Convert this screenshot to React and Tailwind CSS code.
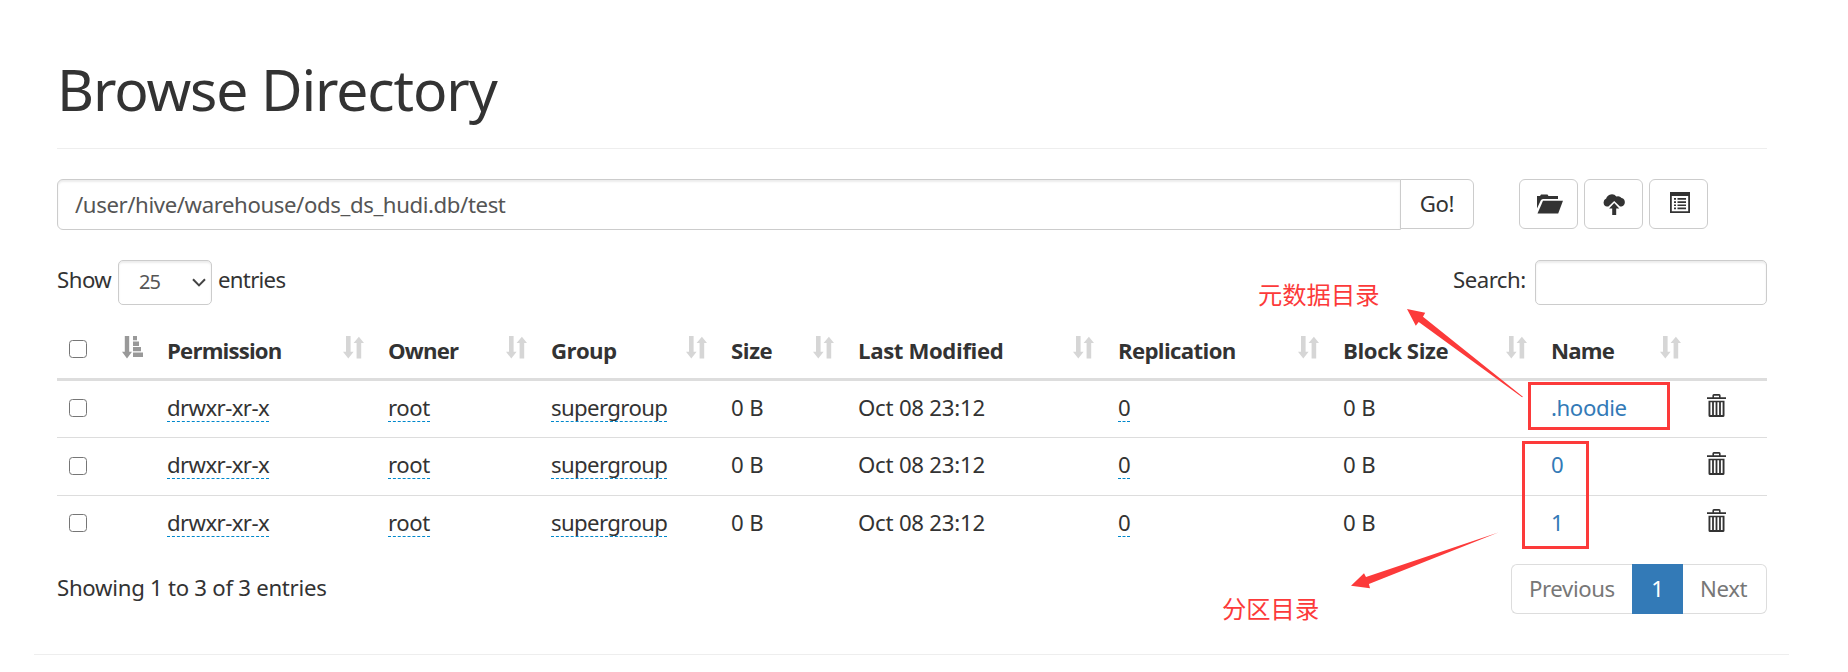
import React from "react";

const columns = [
  { label: "Permission", width: "w-[221px]", track: "tracking-[-0.83px]" },
  { label: "Owner", width: "w-[163px]", track: "tracking-[-0.83px]" },
  { label: "Group", width: "w-[180px]", track: "tracking-[-0.6px]" },
  { label: "Size", width: "w-[127px]", track: "tracking-[-0.4px]" },
  { label: "Last Modified", width: "w-[260px]", track: "tracking-[-0.38px]" },
  { label: "Replication", width: "w-[225px]", track: "tracking-[-0.65px]" },
  { label: "Block Size", width: "w-[208px]", track: "tracking-[-0.42px]" },
  { label: "Name", width: "w-[154px]", track: "tracking-[-0.85px]" },
];

const rows = [{ name: ".hoodie" }, { name: "0" }, { name: "1" }];

function SortBoth() {
  return (
    <svg className="h-[23px] w-[21px] shrink-0 fill-[#d6d6d6]" viewBox="0 0 21 23">
      <path d="M3 0h4.600v15.800H10.600L5.300 22.600 0 15.800H3z" />
      <path d="M13.600 22.600h4.600V7H21L15.900 0.700 10.600 7h3z" />
    </svg>
  );
}

function SortAsc() {
  return (
    <svg className="h-[23px] w-[21px] shrink-0 fill-[#999]" viewBox="0 0 21 23">
      <path d="M2.800 0h4.400v15.800H10L5 22.500 0 15.800h2.800z" />
      <path d="M11 0h4v4.300h-4zM11 5.600h6v4.300h-6zM11 11h8v4.300h-8zM11 16.600h10v4.300h-10z" />
    </svg>
  );
}

function FolderOpen() {
  return (
    <svg className="h-5 w-[26px] fill-[#333]" viewBox="0 0 26 20">
      <path d="M0 14.500V2h3L4 0.400h6.500L11.500 2H21V5H6a2.500 2.500 0 0 0-2.300 1.500z" />
      <path d="M6 6.800H26l-4.800 12.700H0.500z" />
    </svg>
  );
}

function CloudUpload() {
  return (
    <svg className="h-[21px] w-[22px] fill-[#333]" viewBox="0 0 22 21">
      <path d="M4 12.600A4.200 4.200 0 0 1 3.200 4.600 5.800 5.800 0 0 1 13.400 2.600 5 5 0 0 1 18.600 3.900 4.500 4.500 0 0 1 18.400 12.600H17L11.200 7 5.400 12.600z" />
      <path d="M11.200 9 16.300 14.600H13.200V21H9.200V14.600H6.100z" />
    </svg>
  );
}

function ListAlt() {
  return (
    <svg className="h-[21px] w-5 fill-[#333]" viewBox="0 0 20 21">
      <path fillRule="evenodd" d="M0 0h20v21H0zM1.800 4v15.200h16.400V4z" />
      <path d="M4 6h2v1.700H4zM7.500 6H16v1.700H7.500zM4 9.200h2v1.700H4zM7.500 9.200H16v1.700H7.500zM4 12.400h2v1.700H4zM7.500 12.400H16v1.700H7.500zM4 15.600h2v1.700H4zM7.500 15.600H16v1.700H7.500z" />
    </svg>
  );
}

function Trash() {
  return (
    <svg className="h-[23px] w-[19px] fill-[#333]" viewBox="0 0 19 23">
      <path fillRule="evenodd" d="M0 3.200h5.400V1.500Q5.400 0 6.900 0h5.200q1.500 0 1.500 1.500v1.700H19v1.900H0zM7 1.700v1.500h5V1.700z" />
      <path fillRule="evenodd" d="M1.500 6.700h16V21.500q0 1.500-1.500 1.500h-13q-1.500 0-1.500-1.500zM3.400 8.200v12.900h1.700V8.200zM6.900 8.200v12.900h1.700V8.200zM10.400 8.200v12.900h1.700V8.200zM13.900 8.200v12.900h1.700V8.200z" />
    </svg>
  );
}

function IconButton({ children }) {
  return (
    <button className="flex h-[50px] w-[59px] justify-center rounded-md border border-[#ccc] bg-white">
      {children}
    </button>
  );
}

function Checkbox() {
  return (
    <span className="block h-[18px] w-[18px] rounded-[3.500px] border-[1.500px] border-[#767676] bg-white" />
  );
}

function Editable({ children, track }) {
  return (
    <span className={"inline-block h-[28px] border-b border-dashed border-[#0088cc] " + track}>{children}</span>
  );
}

const cell = "pl-[12px] pt-[13px] align-top leading-[28px]";

export default function App() {
  return (
    <div className="relative h-[672px] w-[1848px] overflow-hidden bg-white font-['Noto_Sans','Noto_Sans_CJK_SC',sans-serif] text-[22.2px] text-[#333]">
      <main className="ml-[57px] w-[1710px]">
        <header className="h-[149px] border-b border-[#eee] pt-[56px]">
          <h1 className="text-[57px] leading-[66px] tracking-[-1.13px]">Browse Directory</h1>
        </header>

        <div className="mt-[30px] flex items-start">
          <div className="flex h-[51px] w-[1344px] items-center rounded-l-md border border-[#ccc] pl-[17px] tracking-[-0.4px] text-[#555] shadow-[inset_0_2px_2px_rgba(0,0,0,0.075)]">
            /user/hive/warehouse/ods_ds_hudi.db/test
          </div>
          <button className="-ml-px h-[50px] w-[74px] rounded-r-md border border-[#ccc] bg-white tracking-[-0.4px]">Go!</button>
          <div className="ml-[45px] flex gap-[6px]">
            <IconButton><span className="pl-[3px] pt-[14px]"><FolderOpen /></span></IconButton>
            <IconButton><span className="pl-px pt-[14px]"><CloudUpload /></span></IconButton>
            <IconButton><span className="pl-[2px] pt-[12px]"><ListAlt /></span></IconButton>
          </div>
        </div>

        <div className="mt-[30px] flex h-[45px] justify-between">
          <div className="flex items-start leading-[40px]">
            <span className="w-[61px] tracking-[-0.5px]">Show</span>
            <div className="flex h-[45px] w-[94px] items-center justify-between rounded-[5px] border border-[#ccc] pb-px pl-[20px] pr-[5px] text-[20px] text-[#555] shadow-[inset_0_2px_2px_rgba(0,0,0,0.075)]">
              <span className="tracking-[-1px]">25</span>
              <svg className="h-[9px] w-[14px]" viewBox="0 0 14 9" fill="none" stroke="#444" strokeWidth="2">
                <path d="M1 1.200 7 7.400 13 1.200" />
              </svg>
            </div>
            <span className="ml-[6px] tracking-[-0.7px]">entries</span>
          </div>
          <div className="flex items-start leading-[40px]">
            <span className="w-[82px] tracking-[-0.5px]">Search:</span>
            <div className="h-[45px] w-[232px] rounded-[5px] border border-[#ccc] shadow-[inset_0_2px_2px_rgba(0,0,0,0.075)]" />
          </div>
        </div>

        <table className="mt-[19px] w-[1710px] table-fixed border-separate border-spacing-0">
          <thead>
            <tr className="h-[57px]">
              <th className="w-[98px] border-b-3 border-[#ddd] p-0 align-top">
                <div className="flex justify-between pl-[12px] pr-[12px] pt-[12px]">
                  <span className="pt-[4px]"><Checkbox /></span>
                  <SortAsc />
                </div>
              </th>
              {columns.map((c) => (
                <th key={c.label} className={"border-b-3 border-[#ddd] p-0 text-left align-top font-['Open_Sans'] font-bold " + c.width}>
                  <div className="flex items-start justify-between pl-[12px] pr-[12px] pt-[12px]">
                    <span className={"mt-px whitespace-nowrap leading-[28px] " + c.track}>{c.label}</span>
                    <SortBoth />
                  </div>
                </th>
              ))}
              <th className="w-[74px] border-b-3 border-[#ddd] p-0" />
            </tr>
          </thead>
          <tbody className="[&>tr+tr>td]:border-t [&>tr+tr>td]:border-[#ddd]">
            {rows.map((r, i) => (
              <tr key={r.name} className={i === 0 ? "h-[56px]" : "h-[58px]"}>
                <td className={i === 1 ? "pl-[12px] pt-[19px] align-top" : "pl-[12px] pt-[18px] align-top"}><Checkbox /></td>
                <td className={cell}><Editable track="tracking-[-0.6px]">drwxr-xr-x</Editable></td>
                <td className={cell}><Editable track="tracking-[-0.4px]">root</Editable></td>
                <td className={cell}><Editable track="tracking-[-0.62px]">supergroup</Editable></td>
                <td className={cell + " tracking-[-0.1px]"}>0 B</td>
                <td className={cell + " tracking-[-0.22px]"}>Oct 08 23:12</td>
                <td className={cell}><Editable track="tracking-[-0.4px]">0</Editable></td>
                <td className={cell + " tracking-[-0.1px]"}>0 B</td>
                <td className={cell + " tracking-[-0.4px] text-[#337ab7]"}>{r.name}</td>
                <td className={i === 1 ? "pl-[14px] pt-[14px] align-top" : "pl-[14px] pt-[13px] align-top"}><Trash /></td>
              </tr>
            ))}
          </tbody>
        </table>

        <div className="mt-[11px] flex h-[50px] justify-between">
          <div className="pt-[4px] leading-[40px] tracking-[-0.27px]">Showing 1 to 3 of 3 entries</div>
          <nav className="flex text-[#777]">
            <span className="flex h-[50px] w-[121px] items-center rounded-l-md border border-r-0 border-[#ddd] pl-[17px] tracking-[-0.4px]">Previous</span>
            <span className="flex h-[50px] w-[51px] items-center justify-center bg-[#337ab7] text-white">1</span>
            <span className="flex h-[50px] w-[84px] items-center rounded-r-md border border-l-0 border-[#ddd] pl-[17px] tracking-[-0.4px]">Next</span>
          </nav>
        </div>
      </main>
      <hr className="ml-[34px] mt-[40px] w-[1755px] border-t border-[#eee]" />

      <div className="absolute left-[1528px] top-[382px] h-[48px] w-[142px] border-3 border-[#fc3a3a]" />
      <div className="absolute left-[1522px] top-[441px] h-[108px] w-[67px] border-3 border-[#fc3a3a]" />
      <span className="absolute left-[1258px] top-[276px] font-['Noto_Sans_CJK_SC',sans-serif] text-[24.300px] leading-[36px] text-[#fc3a3a]">元数据目录</span>
      <span className="absolute left-[1222px] top-[590px] font-['Noto_Sans_CJK_SC',sans-serif] text-[24.300px] leading-[36px] text-[#fc3a3a]">分区目录</span>
      <svg className="absolute left-[1340px] top-[300px] h-[300px] w-[190px] fill-[#fc3a3a]" viewBox="1340 300 190 300">
        <path d="M1407 309 1425.200 312.800 1423 316.700 1522.900 396.700 1522.100 397.300 1418.700 322 1415.800 325.700z" />
        <path d="M1351 585.800 1364 573.300 1366 577 1498.300 532.500 1368.900 584 1370 588.200z" />
      </svg>
    </div>
  );
}
